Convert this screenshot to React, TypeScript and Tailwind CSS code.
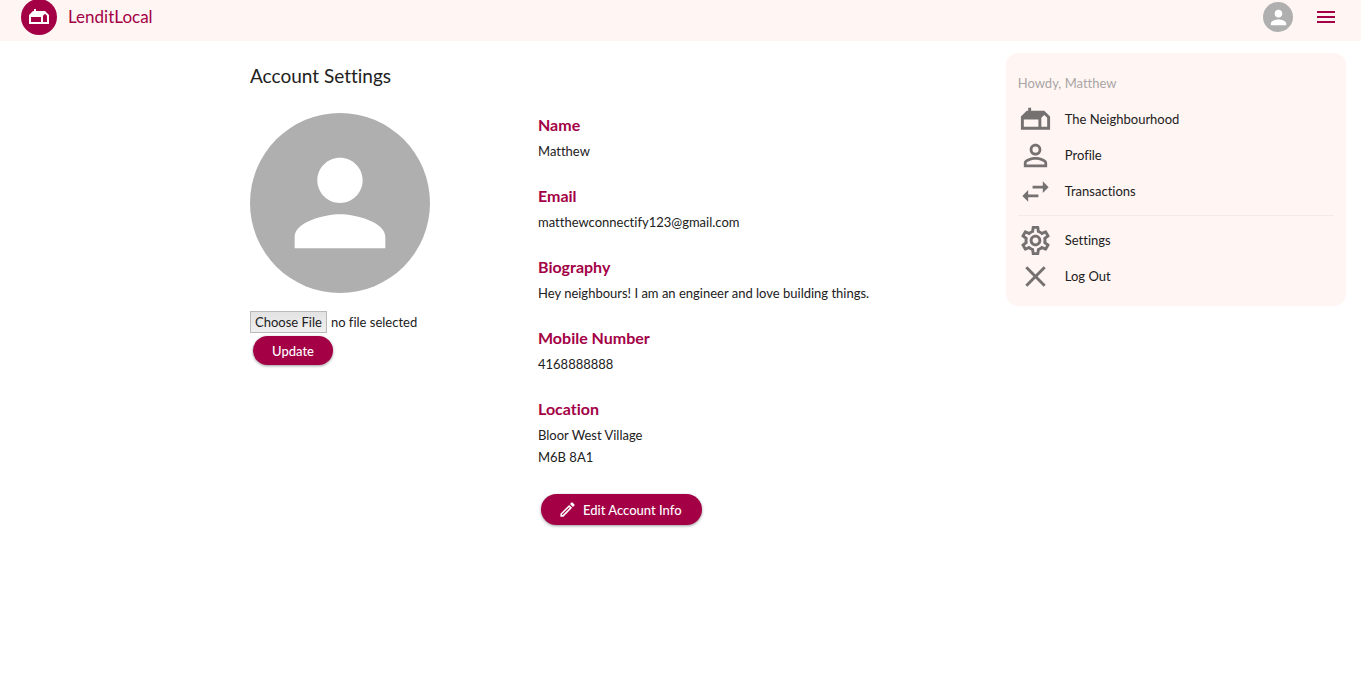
import type { ReactNode } from "react";
import {
  MdClose,
  MdMenu,
  MdOutlineEdit,
  MdOutlineGite,
  MdOutlineSettings,
  MdPerson,
  MdPersonOutline,
  MdSwapHoriz,
} from "react-icons/md";

function Header() {
  return (
    <header className="bg-[#fff5f3] pb-1.5">
      <div className="-mt-px flex items-center justify-between pl-[21px] pr-[23px]">
        <a href="#" className="flex items-center gap-[11px] text-[#a30046]">
          <span className="flex size-9 items-center justify-center rounded-full bg-[#a30046] text-white">
            <MdOutlineGite size={24} />
          </span>
          <span className="text-[17px] leading-6">LenditLocal</span>
        </a>
        <div className="flex items-center gap-[21px]">
          <button
            type="button"
            aria-label="Account"
            className="flex size-[30px] items-center justify-center rounded-full bg-[#afafaf] text-white"
          >
            <MdPerson size={23} />
          </button>
          <button type="button" aria-label="Menu" className="text-[#a30046]">
            <MdMenu size={24} />
          </button>
        </div>
      </div>
    </header>
  );
}

function Field({ label, children }: { label: string; children: ReactNode }) {
  return (
    <div>
      <dt className="text-base leading-6 font-bold text-[#a30046]">{label}</dt>
      <dd className="pt-[3px] pb-px text-[13px] leading-[22px]">{children}</dd>
    </div>
  );
}

function MenuItem({ icon, children }: { icon: ReactNode; children: ReactNode }) {
  return (
    <li>
      <a href="#" className="flex h-9 items-center gap-3">
        <span className="flex w-[35px] justify-center text-[#757171]">{icon}</span>
        <span className="text-[13px] leading-5">{children}</span>
      </a>
    </li>
  );
}

function SideMenu() {
  return (
    <aside className="w-full shrink-0 self-start rounded-xl bg-[#fff5f3] px-3 pt-5 pb-3 lg:w-[25vw]">
      <p className="text-[13px] leading-5 text-[#aaa5a4]">Howdy, Matthew</p>
      <nav aria-label="Account menu" className="pt-2">
        <ul>
          <MenuItem icon={<MdOutlineGite size={35} />}>The Neighbourhood</MenuItem>
          <MenuItem icon={<MdPersonOutline size={35} />}>Profile</MenuItem>
          <MenuItem icon={<MdSwapHoriz size={35} />}>Transactions</MenuItem>
        </ul>
        <hr className="my-1.5 border-[#f5eaea]" />
        <ul>
          <MenuItem icon={<MdOutlineSettings size={35} />}>Settings</MenuItem>
          <MenuItem icon={<MdClose size={35} />}>Log Out</MenuItem>
        </ul>
      </nav>
    </aside>
  );
}

export default function App() {
  return (
    <div className="min-h-screen bg-white font-['Lato',sans-serif] text-[#212121] [font-variant-ligatures:none]">
      <Header />
      <div className="flex flex-col gap-4 pt-3 pr-[15px] pl-4 lg:flex-row xl:pl-[250px]">
        <main className="min-w-0 flex-1 pt-[9px]">
          <h1 className="text-[19px] leading-7">Account Settings</h1>
          <div className="flex flex-col gap-8 pt-[23px] md:flex-row md:gap-0">
            <form className="md:w-72 md:shrink-0">
              <div className="flex size-[180px] items-center justify-center rounded-full bg-[#afafaf] text-white">
                <MdPerson size={136} />
              </div>
              <label className="flex items-center gap-1 pt-[18px] text-[13px] leading-5">
                <input type="file" className="sr-only" />
                <span className="border border-[#b9b9b9] bg-linear-to-b from-[#e3e3e3] to-[#f0f0f0] px-1">
                  Choose File
                </span>
                <span>no file selected</span>
              </label>
              <button
                type="button"
                className="mt-[3px] ml-[3px] h-[29px] rounded-full bg-[#a30046] px-[19px] text-[13px] leading-5 font-medium text-white shadow-[0_1px_3px_rgba(0,0,0,0.4)]"
              >
                Update
              </button>
            </form>
            <div className="min-w-0 flex-1">
              <dl className="flex flex-col gap-[21px]">
                <Field label="Name">Matthew</Field>
                <Field label="Email">matthewconnectify123@gmail.com</Field>
                <Field label="Biography">
                  Hey neighbours! I am an engineer and love building things.
                </Field>
                <Field label="Mobile Number">4168888888</Field>
                <Field label="Location">
                  Bloor West Village
                  <br />
                  M6B 8A1
                </Field>
              </dl>
              <button
                type="button"
                className="mt-[25px] ml-[3px] flex h-[31px] items-center gap-1.5 rounded-full bg-[#a30046] pr-5 pl-[17px] text-[13px] leading-5 font-medium text-white shadow-[0_1px_3px_rgba(0,0,0,0.4)]"
              >
                <MdOutlineEdit size={19} />
                Edit Account Info
              </button>
            </div>
          </div>
        </main>
        <SideMenu />
      </div>
    </div>
  );
}
